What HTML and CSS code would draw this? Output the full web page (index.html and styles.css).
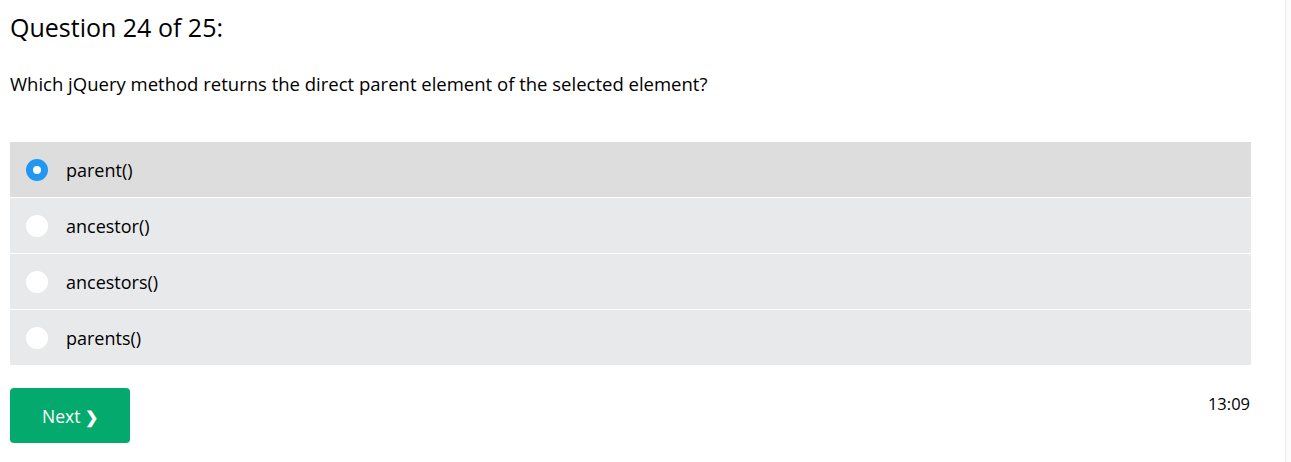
FILE: index.html
```html
<!DOCTYPE html>
<html>
<head>
<meta charset="utf-8">
<link rel="stylesheet" href="styles.css">
</head>
<body>
<div class="page">
  <div class="quiz">
    <h2 class="title">Question 24 of 25:</h2>
    <p class="question">Which jQuery method returns the direct parent element of the selected element?</p>
    <div class="options">
      <label class="option selected"><span class="radio checked"></span><span class="opt-text">parent()</span></label>
      <label class="option"><span class="radio"></span><span class="opt-text">ancestor()</span></label>
      <label class="option"><span class="radio"></span><span class="opt-text">ancestors()</span></label>
      <label class="option"><span class="radio"></span><span class="opt-text">parents()</span></label>
    </div>
    <div class="footer">
      <button class="next">Next <span class="chev">&#10095;</span></button>
      <span class="timer">13:09</span>
    </div>
  </div>
</div>
</body>
</html>
```
FILE: styles.css
```css
html, body {
  margin: 0;
  padding: 0;
  background: #fcfcfc;
}
body {
  font-family: "Open Sans", "Noto Sans", sans-serif;
  color: #000;
}
.page {
  width: 1286px;
  height: 462px;
  background: #fff;
  border-right: 1px solid #ececec;
  box-sizing: border-box;
}
.quiz {
  padding: 0 34px 0 10px;
}
.title {
  margin: 0;
  padding-top: 11px;
  font-size: 25px;
  font-weight: 400;
  line-height: 32px;
}
.question {
  margin: 29px 0 0;
  font-size: 18.5px;
  line-height: 24px;
}
.options {
  margin-top: 46px;
  display: flex;
  flex-direction: column;
  gap: 1px;
}
.option {
  display: flex;
  align-items: center;
  height: 55px;
  background: #e7e9eb;
  padding-left: 16px;
}
.option.selected {
  background: #dddddd;
}
.radio {
  width: 22px;
  height: 22px;
  border-radius: 50%;
  background: #fff;
  box-sizing: border-box;
  margin-right: 18px;
  flex: none;
}
.radio.checked {
  background: #fff;
  border: 7px solid #2196f3;
}
.opt-text {
  font-size: 18px;
}
.footer {
  display: flex;
  justify-content: space-between;
  align-items: flex-start;
  margin-top: 23px;
}
.next {
  width: 120px;
  height: 55px;
  background: #04aa6d;
  color: #fff;
  border: none;
  border-radius: 4px;
  font-family: inherit;
  font-size: 17.5px;
  padding: 0;
}
.chev {
  font-size: 16px;
  font-weight: 700;
}
.timer {
  font-size: 16.5px;
  margin-top: 4px;
  margin-right: 1px;
}
```
